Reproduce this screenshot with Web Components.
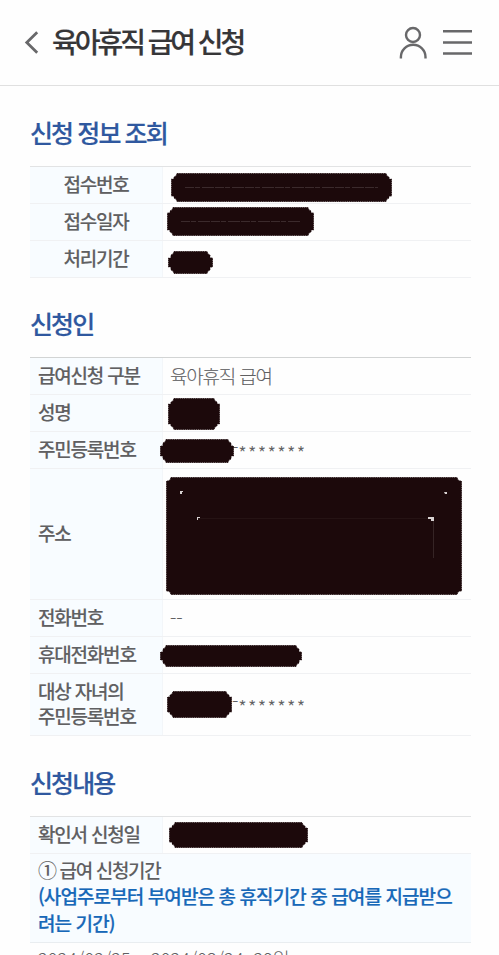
<!DOCTYPE html>
<html lang="ko">
<head>
<meta charset="utf-8">
<title>육아휴직 급여 신청</title>
<style>
  html {
    overflow: hidden;
    height: 955px;
  }
  body {
    margin: 0;
    height: 955px;
    overflow: hidden;
    background: #fefefe;
    color: #606062;
    font-family: "Noto Sans CJK KR", "Noto Sans", sans-serif;
  }
  .dashes {
    letter-spacing: 0;
  }
</style>
</head>
<body>
<app-header>육아휴직 급여 신청</app-header>
<main>
  <info-section heading="신청 정보 조회" style="--top: 23px">
    <info-row center label="접수번호"><ink-mark x="8" y="6" w="221" h="29" seam></ink-mark></info-row>
    <info-row center label="접수일자"><ink-mark x="4" y="3" w="147" h="29" seam></ink-mark></info-row>
    <info-row center label="처리기간"><ink-mark x="5" y="10" w="45" h="23"></ink-mark></info-row>
  </info-section>
  <info-section heading="신청인" style="--top: 22px" dark>
    <info-row label="급여신청 구분">육아휴직 급여</info-row>
    <info-row label="성명"><ink-mark x="5" y="3" w="52" h="32"></ink-mark></info-row>
    <info-row label="주민등록번호"><masked-number></masked-number><ink-mark x="-3" y="7" w="74" h="24"></ink-mark></info-row>
    <info-row label="주소" style="--height: 131px"><ink-mark x="3" y="8" w="296" h="118" area></ink-mark></info-row>
    <info-row label="전화번호"><span class="dashes">--</span></info-row>
    <info-row label="휴대전화번호"><ink-mark x="-3" y="8" w="142" h="22"></ink-mark></info-row>
    <info-row label="대상 자녀의&#10;주민등록번호" style="--height: 62px"><masked-number></masked-number><ink-mark x="4" y="17" w="65" h="27"></ink-mark></info-row>
  </info-section>
  <info-section heading="신청내용" style="--top: 23px">
    <info-row label="확인서 신청일"><ink-mark x="6" y="5" w="139" h="26"></ink-mark></info-row>
    <info-note>① 급여 신청기간<span slot="hint">(사업주로부터 부여받은 총 휴직기간 중 급여를 지급받으<br>려는 기간)</span></info-note>
    <info-period>2024/02/25 ~ 2024/03/24, 29일</info-period>
  </info-section>
</main>

<script>
customElements.define(
  'app-header',
  class extends HTMLElement {
    constructor() {
      super();
      const shadowRoot = this.attachShadow({ mode: 'open' });
      shadowRoot.innerHTML = `<style>
        :host {
          display: flex;
          align-items: center;
          box-sizing: border-box;
          height: 86px;
          padding: 0 27px 2px 24px;
          border-bottom: 1px solid #e0e0e0;
          color: #363638;
        }
        svg {
          display: block;
          fill: none;
          stroke: #68686a;
          stroke-width: 2.4;
        }
        h1 {
          flex: 1;
          margin: -2px 0 0 13px;
          font-size: 28px;
          font-weight: 500;
          line-height: 40px;
          letter-spacing: -3.05px;
          white-space: nowrap;
          -webkit-text-stroke: 0.2px;
        }
        .menu {
          margin-left: 14px;
        }
        </style>
        <svg width="15" height="24" viewBox="0 0 15 24"><path d="M13.2 2.3 2.8 12.5l10.4 10.2" stroke-width="2.8"/></svg>
        <h1><slot></slot></h1>
        <svg width="30" height="34" viewBox="0 0 30 34"><circle cx="14" cy="10" r="7"/><path d="M1.9 33.5v-1.4a12.3 12.3 0 0 1 24.6 0v1.4"/></svg>
        <svg class="menu" width="29" height="28" viewBox="0 0 29 28"><path d="M0 3.3h29M0 14.5h29M0 25.5h29"/></svg>`;
    }
  }
);

customElements.define(
  'info-section',
  class extends HTMLElement {
    constructor() {
      super();
      const shadowRoot = this.attachShadow({ mode: 'open' });
      shadowRoot.innerHTML = `<style>
        :host {
          display: block;
          padding: var(--top) 28px 0 30px;
        }
        h2 {
          margin: 0 0 10px;
          color: #2f589f;
          font-size: 25px;
          font-weight: 500;
          line-height: 47px;
          letter-spacing: -1.9px;
          white-space: nowrap;
          -webkit-text-stroke: 0.2px;
        }
        .rows {
          border-top: 1px solid #e2e3e4;
        }
        :host([dark]) .rows {
          border-color: #d2d4d4;
        }
        </style>
        <h2></h2>
        <div class="rows"><slot></slot></div>`;
    }

    connectedCallback() {
      this.shadowRoot.querySelector('h2').textContent = this.getAttribute('heading');
    }
  }
);

customElements.define(
  'info-row',
  class extends HTMLElement {
    constructor() {
      super();
      const shadowRoot = this.attachShadow({ mode: 'open' });
      shadowRoot.innerHTML = `<style>
        :host {
          display: grid;
          grid-template-columns: 133px 1fr;
          box-sizing: border-box;
          height: var(--height, 37px);
          border-bottom: 1px solid #f0f1f3;
          font-size: 19px;
          line-height: 25px;
        }
        .label {
          display: flex;
          align-items: center;
          padding: 0 0 3px 8px;
          border-right: 1px solid #f3f6f9;
          background: #f8fcff;
          font-weight: 500;
          letter-spacing: -1.2px;
          white-space: pre;
          -webkit-text-stroke: 0.1px;
        }
        :host([center]) .label {
          justify-content: center;
          padding: 0 0 4px;
        }
        .value {
          position: relative;
          display: flex;
          align-items: center;
          padding: 0 0 2px 7px;
          font-weight: 300;
          letter-spacing: -1.2px;
          -webkit-text-stroke: 0.1px;
        }
        </style>
        <div class="label"></div>
        <div class="value"><slot></slot></div>`;
    }

    connectedCallback() {
      this.shadowRoot.querySelector('.label').textContent = this.getAttribute('label');
    }
  }
);

// Tail of a resident number, the leading digits sit under an ink mark
customElements.define(
  'masked-number',
  class extends HTMLElement {
    constructor() {
      super();
      const shadowRoot = this.attachShadow({ mode: 'open' });
      shadowRoot.innerHTML = `<style>
        :host {
          display: flex;
          margin-left: 62px;
          letter-spacing: 0;
        }
        .stars {
          padding-top: 6px;
          letter-spacing: 1.3px;
        }
        </style>
        <span>-</span><span class="stars">*******</span>`;
    }
  }
);

// Marker stroke laid over the cell's text
customElements.define(
  'ink-mark',
  class extends HTMLElement {
    constructor() {
      super();
      this.attachShadow({ mode: 'open' });
    }

    connectedCallback() {
      const [x, y, w, h] = ['x', 'y', 'w', 'h'].map(name => Number(this.getAttribute(name)));
      const area = this.hasAttribute('area');
      const s = area ? 4 : 5;
      const t = area ? 4 : h > 25 ? 6 : 7;
      const r = w - s;
      const b = h - t;
      let detail = '';
      if (this.hasAttribute('seam')) {
        detail = `<path class="seam" d="M14 ${h / 2}H${w - 14}" stroke-dasharray="9 1 5 2 12 1"/>`;
      }
      if (area) {
        detail = `<path class="seam" d="M32 41.5H${w - 28}" opacity=".3"/>
          <path class="seam" d="M267.5 44v37" opacity=".8"/>
          <path class="speck" d="M14 14h3v1h-1v2h-2zM278 15h3v2h-2zM31 40h3v1h-2v2h-1zM262 40h6v4h-3v-2h-3z"/>`;
      }
      this.shadowRoot.innerHTML = `<style>
        :host {
          position: absolute;
          left: ${x}px;
          top: ${y}px;
          display: block;
        }
        svg {
          display: block;
          overflow: visible;
        }
        .ink {
          fill: #1c090b;
          stroke: #1c090b;
          stroke-dasharray: 1.5 0.7;
          stroke-width: 0.8;
        }
        .seam {
          fill: none;
          stroke: #493a3b;
          stroke-width: 0.7;
        }
        .speck {
          fill: #d8d2d2;
        }
        </style>
        <svg width="${w}" height="${h}" viewBox="0 0 ${w} ${h}">
          <path class="ink" d="M${s + 1} .5H${r - 1}L${r} 3l2 1V${t}H${w - 0.5}V${b}H${r + 2}V${h - 4}L${r} ${h - 3}l-1 2.5H${s + 1}L${s} ${h - 3}l-2-1V${b}H.5V${t}H${s - 2}V4l2-1z"/>
          ${detail}
        </svg>`;
    }
  }
);

customElements.define(
  'info-note',
  class extends HTMLElement {
    constructor() {
      super();
      const shadowRoot = this.attachShadow({ mode: 'open' });
      shadowRoot.innerHTML = `<style>
        :host {
          display: block;
          box-sizing: border-box;
          height: 89px;
          padding: 3px 0 0 8px;
          border-bottom: 1px solid #e9edf0;
          background: #f8fcff;
          font-size: 19px;
          font-weight: 500;
          line-height: 26.3px;
          letter-spacing: -1.35px;
          white-space: nowrap;
        }
        .hint {
          color: #1768b8;
          letter-spacing: -0.9px;
          -webkit-text-stroke: 0.2px;
        }
        </style>
        <slot></slot>
        <div class="hint"><slot name="hint"></slot></div>`;
    }
  }
);

customElements.define(
  'info-period',
  class extends HTMLElement {
    constructor() {
      super();
      const shadowRoot = this.attachShadow({ mode: 'open' });
      shadowRoot.innerHTML = `<style>
        :host {
          display: block;
          padding: 2px 0 0 8px;
          font-size: 18px;
          font-weight: 300;
          line-height: 26px;
          letter-spacing: 0.15px;
        }
        </style>
        <slot></slot>`;
    }
  }
);
</script>
</body>
</html>
